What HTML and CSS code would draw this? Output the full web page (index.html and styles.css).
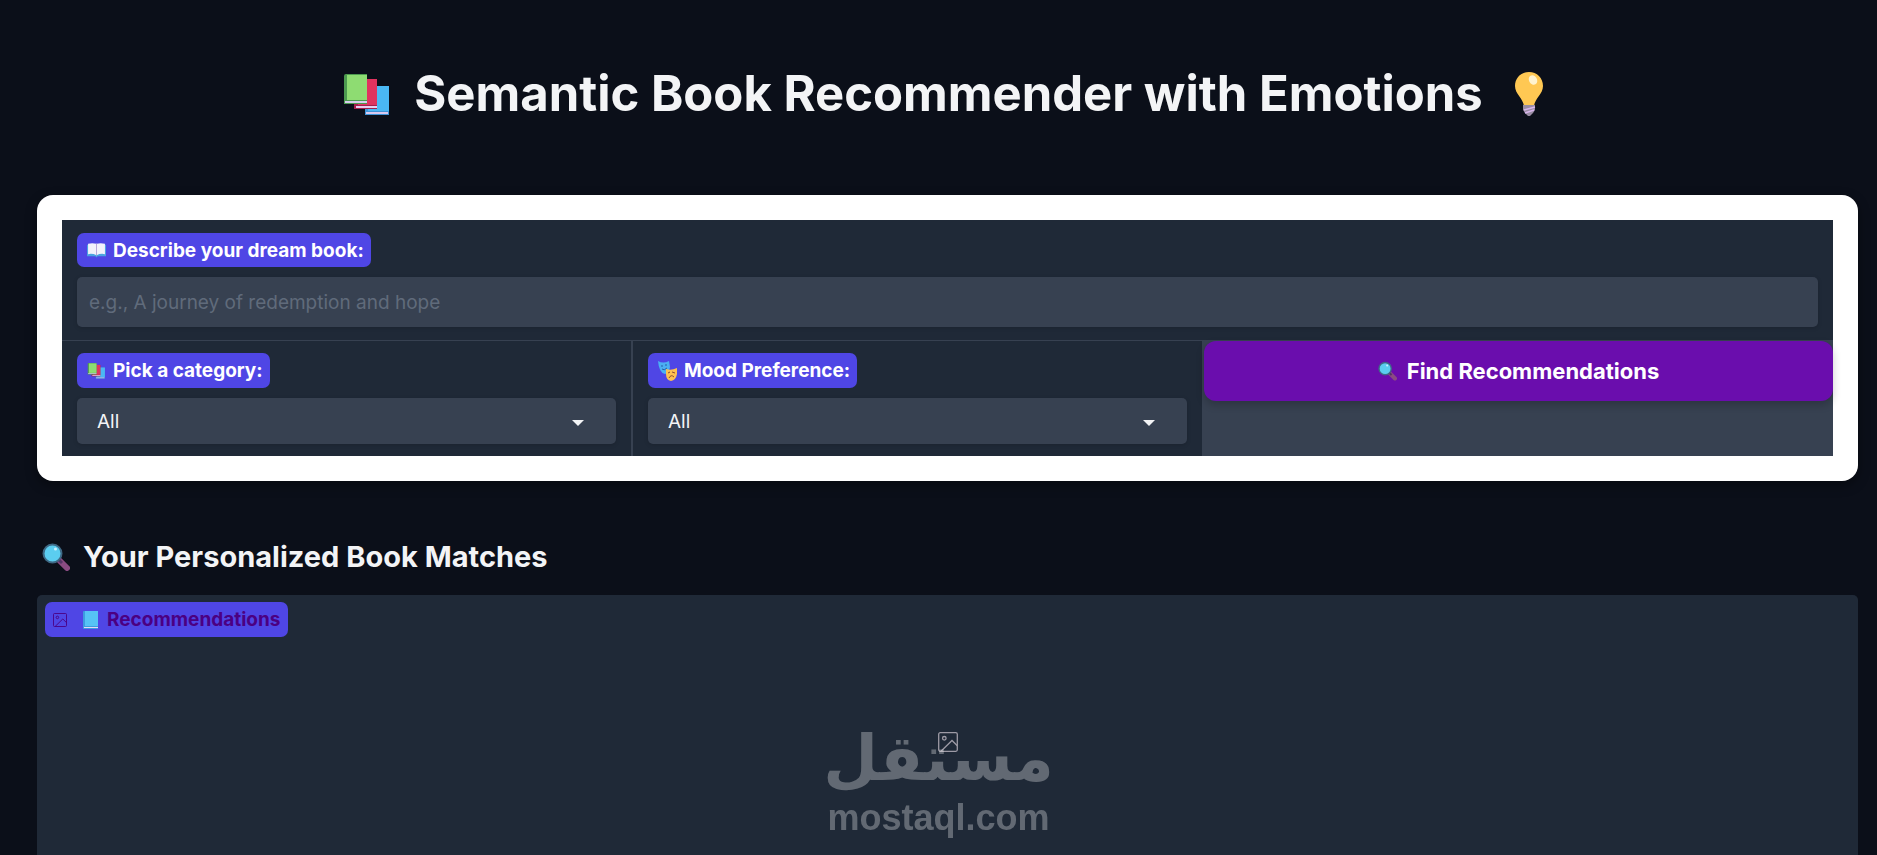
FILE: index.html
```html
<!DOCTYPE html>
<html lang="en">
<head>
<meta charset="utf-8">
<meta name="viewport" content="width=device-width, initial-scale=1">
<title>Semantic Book Recommender</title>
<link rel="stylesheet" href="styles.css">
</head>
<body>
<svg class="defs" aria-hidden="true">
  <symbol id="books" viewBox="0 0 46 42">
    <path fill="#3f93d6" d="M21 12h24v29H21z"/><path fill="#4ab8f4" d="M24 12h21v25H24z"/><path fill="#d8c9ef" d="M22 38h22v2H22z"/>
    <path fill="#a61e4d" d="M10 5h23v30H10z"/><path fill="#e0335f" d="M14 5h19v26H14z"/><path fill="#e8cdf0" d="M12 32h21v2H12z"/>
    <path fill="#4c9a4f" d="M0 2q0-2 2-2h21v30H0z"/><path fill="#8edc72" d="M3 1h20v25H3z"/><path fill="#d8cdee" d="M1 27h22v2H1z"/>
  </symbol>
  <symbol id="bulb" viewBox="0 0 28 44">
    <path fill="#ffc853" d="M14 0C6 0 0 6 0 14c0 8 8 12 9 20h10c1-8 9-12 9-20C28 6 22 0 14 0z"/>
    <ellipse cx="18" cy="8" rx="4" ry="5" fill="#fff3cf" transform="rotate(-30 18 8)"/>
    <path fill="#998ca3" d="M8 33h12v5l-2 3-3 3h-2l-3-3-2-3z"/><path d="M9 38l11-3M10 41l9-3" stroke="#d9b6ed" stroke-width="1.4"/>
  </symbol>
  <symbol id="lens" viewBox="0 0 28 28">
    <path d="M17 17l8 8" stroke="#8a4b82" stroke-width="6" stroke-linecap="round"/><path d="M16 16l4 4" stroke="#533566" stroke-width="3"/>
    <circle cx="10.500" cy="10.500" r="9" fill="#5bcdf0" stroke="#3e6985" stroke-width="2"/><circle cx="13.500" cy="6" r="1.500" fill="#c9f1ff"/>
  </symbol>
  <symbol id="open-book" viewBox="0 0 18 14">
    <path fill="#4aa3e0" d="M0 2h18v11h-8l-1 1-1-1H0z"/><path fill="#f2f1fb" d="M1 1q4-1 8 0 4-1 8 0v10q-4-1-8 1-4-2-8-1z"/><path d="M9 1v11" stroke="#b8a6d8"/>
  </symbol>
  <symbol id="masks" viewBox="0 0 19 20">
    <path fill="#4bb0f2" d="M0 0q5 3 11 0l1 6q-1 6-5 7-6-1-7-13z"/><path d="M3 5h2M7 4h2M4 8q2 2 5-1" stroke="#275fa8" fill="none"/>
    <path fill="#ffc04f" d="M8 8q5 2 11-1v6q-1 6-6 7-5-1-5-7z"/><path d="M10 12l2-1M14 11l3 1M11 17q2-4 5-1" stroke="#8c4a35" fill="none"/>
  </symbol>
  <symbol id="blue-book" viewBox="0 0 15 18">
    <path fill="#3d9be0" d="M0 1q0-1 1-1h14v18H1q-1 0-1-1z"/><path fill="#56c2f5" d="M2 0h13v15H2z"/><path fill="#e3d7f3" d="M1 16h14v1H1z"/>
  </symbol>
  <symbol id="image" viewBox="0 0 20 20">
    <rect x=".7" y=".7" width="18.600" height="18.600" rx="1.500" fill="none" stroke="currentColor" stroke-width="1.300"/>
    <circle cx="6.300" cy="6.300" r="1.800" fill="none" stroke="currentColor" stroke-width="1.300"/><path d="M3 19.300L14 8.500l5.300 5.300" fill="none" stroke="currentColor" stroke-width="1.300"/>
  </symbol>
</svg>

<main class="page">
  <h1 class="title">
    <svg class="title-books" aria-hidden="true"><use href="#books"/></svg>
    <span>Semantic Book Recommender with Emotions</span>
    <svg class="title-bulb" aria-hidden="true"><use href="#bulb"/></svg>
  </h1>

  <form class="panel">
    <div class="fields">
      <div class="field field-wide">
        <label class="tag" for="query"><svg class="tag-icon" aria-hidden="true"><use href="#open-book"/></svg>Describe your dream book:</label>
        <input class="text-input" id="query" type="text" placeholder="e.g., A journey of redemption and hope">
      </div>
      <div class="field">
        <label class="tag" for="category"><svg class="tag-icon" aria-hidden="true"><use href="#books"/></svg>Pick a category:</label>
        <div class="select-wrap">
          <select class="select" id="category"><option>All</option></select>
          <svg class="arrow" viewBox="0 0 12 6" aria-hidden="true"><path d="M0 0h12L6 6z" fill="#f3f4f6"/></svg>
        </div>
      </div>
      <div class="field">
        <label class="tag" for="mood"><svg class="tag-icon tag-masks" aria-hidden="true"><use href="#masks"/></svg>Mood Preference:</label>
        <div class="select-wrap">
          <select class="select" id="mood"><option>All</option></select>
          <svg class="arrow" viewBox="0 0 12 6" aria-hidden="true"><path d="M0 0h12L6 6z" fill="#f3f4f6"/></svg>
        </div>
      </div>
      <div class="action">
        <button class="submit" type="button"><svg class="submit-icon" aria-hidden="true"><use href="#lens"/></svg>Find Recommendations</button>
      </div>
    </div>
  </form>

  <h2 class="subtitle"><svg class="subtitle-icon" aria-hidden="true"><use href="#lens"/></svg>Your Personalized Book Matches</h2>

  <section class="gallery">
    <div class="gallery-label">
      <svg class="label-image" aria-hidden="true"><use href="#image"/></svg>
      <svg class="label-book" aria-hidden="true"><use href="#blue-book"/></svg>
      <span>Recommendations</span>
    </div>
    <svg class="empty-icon" aria-hidden="true"><use href="#image"/></svg>
  </section>
</main>

<div class="watermark">
  <span class="watermark-ar" lang="ar" dir="rtl">مستقل</span>
  <span class="watermark-en">mostaql.com</span>
</div>
</body>
</html>
```
FILE: styles.css
```css
* { box-sizing: border-box; }

body {
  margin: 0;
  background: #0b0f19;
  color: #f3f4f6;
  font-family: Inter, "Open Sans", sans-serif;
}

.defs { position: absolute; width: 0; height: 0; }

.page {
  display: flex;
  flex-direction: column;
  min-height: 100vh;
  padding: 64px 19px 0 37px;
}

.title {
  display: flex;
  justify-content: center;
  align-items: center;
  gap: 24px;
  margin: 0 0 71px;
  font-size: 49px;
  line-height: 60px;
  font-weight: 700;
}
.title-books { width: 46px; height: 42px; margin-top: 2px; }
.title-bulb { width: 28px; height: 44px; margin: 0 8px; }

.panel {
  padding: 25px;
  border-radius: 16px;
  background: #fff;
  box-shadow: 0 4px 12px rgba(0, 0, 0, .4);
}

.fields {
  display: grid;
  grid-template-columns: 569fr 569fr 629fr;
  gap: 1px 2px;
  background: #374151;
}

.field {
  display: flex;
  flex-direction: column;
  align-items: flex-start;
  gap: 10px;
  padding: 12px 15px;
  background: #1f2937;
}
.field-wide { grid-column: 1 / -1; padding: 13px 15px; }
.field-wide .tag { height: 34px; }

.tag {
  display: flex;
  align-items: center;
  gap: 7px;
  height: 35px;
  padding: 0 7px 0 10px;
  border-radius: 7px;
  background: #4f46e5;
  color: #fff;
  font-size: 19px;
  font-weight: 700;
}
.tag-icon { width: 19px; height: 16px; }
.tag-masks { height: 20px; }

.text-input,
.select {
  width: 100%;
  border: 0;
  border-radius: 5px;
  background: #374151;
  color: #f3f4f6;
  font-family: inherit;
  font-size: 19px;
  box-shadow: 0 1px 4px rgba(0, 0, 0, .15);
}
.text-input { height: 50px; padding: 0 12px; }
.text-input::placeholder { color: #606b7b; opacity: 1; }

.select-wrap { display: grid; width: 100%; align-items: center; }
.select {
  grid-area: 1 / 1;
  height: 46px;
  padding: 0 20px;
  appearance: none;
}
.arrow {
  grid-area: 1 / 1;
  justify-self: end;
  width: 12px;
  height: 6px;
  margin: 3px 32px 0 0;
  pointer-events: none;
}

.submit {
  display: flex;
  justify-content: center;
  align-items: center;
  gap: 10px;
  width: 100%;
  height: 60px;
  border: 0;
  border-radius: 12px;
  background: #6a0dad;
  color: #fff;
  font-family: inherit;
  font-size: 22px;
  font-weight: 700;
  box-shadow: 0 4px 8px rgba(0, 0, 0, .2);
}
.submit-icon { width: 19px; height: 20px; }

.subtitle {
  display: flex;
  align-items: center;
  gap: 13px;
  margin: 58px 0 20px 5px;
  font-size: 29px;
  line-height: 36px;
  font-weight: 700;
}
.subtitle-icon { width: 28px; height: 28px; }

.gallery {
  display: flex;
  flex: 1;
  flex-direction: column;
  align-items: flex-start;
  padding: 7px 8px;
  border-radius: 5px 5px 0 0;
  background: #1f2937;
}
.gallery-label {
  display: flex;
  align-items: center;
  height: 35px;
  padding: 0 8px;
  border-radius: 7px;
  background: #4f46e5;
  color: #4b0082;
  font-size: 19px;
  font-weight: 700;
}
.label-image { width: 14px; height: 14px; margin-right: 16px; }
.label-book { width: 15px; height: 18px; margin-right: 9px; }
.empty-icon {
  align-self: center;
  width: 20px;
  height: 20px;
  margin-top: 95px;
  color: #9d9aa5;
}

.watermark {
  position: fixed;
  left: 50%;
  bottom: 16px;
  display: flex;
  flex-direction: column;
  align-items: center;
  transform: translateX(-50%);
  color: #fff;
  opacity: .3;
  font-weight: 700;
}
.watermark-ar {
  font-family: "DejaVu Sans", sans-serif;
  font-size: 63px;
  line-height: 76px;
}
.watermark-en {
  font-family: "Liberation Sans", sans-serif;
  font-size: 36px;
  line-height: 42px;
}
```
